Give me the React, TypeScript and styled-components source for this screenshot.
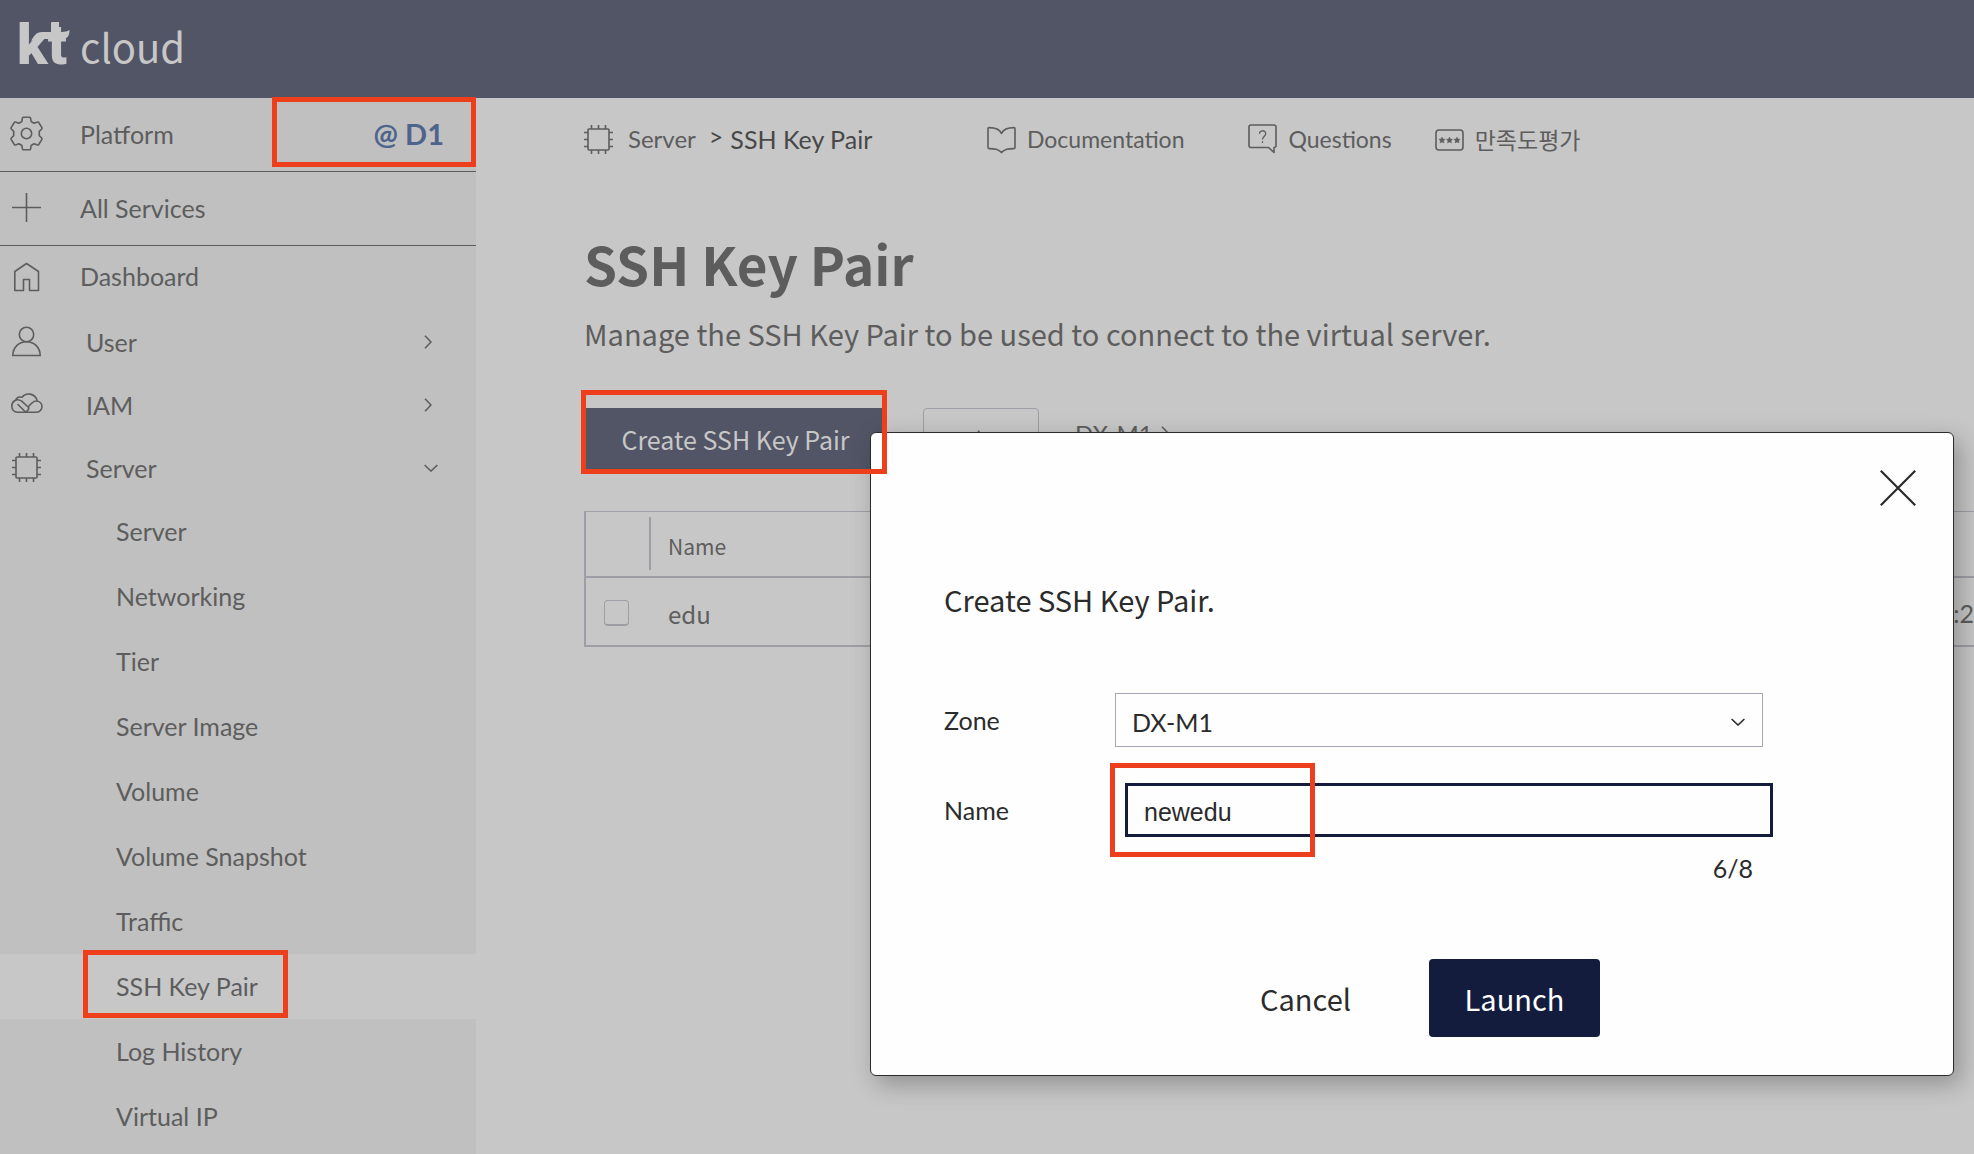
import React, { useState } from "react";
import styled, { createGlobalStyle, css } from "styled-components";

const lato = `Lato, "Noto Sans CJK KR", sans-serif`;
const noto = `"Noto Sans CJK KR", "Noto Sans", sans-serif`;

const color = {
  header: "#525566",
  sidebar: "#c0c0c0",
  page: "#c7c7c7",
  text: "#5d5d5d",
  strong: "#484848",
  line: "#9f9ea6",
  ink: "#2b2b2b",
  navy: "#141c3d",
  mark: "#ee3f1d",
};

const GlobalStyle = createGlobalStyle`
  * { box-sizing: border-box; }
  body {
    margin: 0;
    background: ${color.page};
    color: ${color.text};
    font-family: ${lato};
    font-size: 25px;
    overflow: hidden;
  }
  button, input, select { font: inherit; color: inherit; margin: 0; }
  button { cursor: pointer; }
  svg { display: block; flex: none; }
`;

const Page = styled.div`
  position: relative;
  min-height: 100vh;
  display: flex;
  flex-direction: column;
`;

const Header = styled.header`
  height: 98px;
  padding-left: 10px;
  background: ${color.header};
`;

const Logo = styled.a`
  display: block;
  width: 190px;
  text-decoration: none;
`;

const Columns = styled.div`
  flex: 1;
  display: flex;
  height: calc(100vh - 98px);
`;

const Sidebar = styled.nav`
  flex: none;
  width: 476px;
  background: ${color.sidebar};
`;

const Mark = styled.span<{ $top: number; $right: number; $bottom: number; $left: number }>`
  position: absolute;
  z-index: 20;
  top: ${(p) => p.$top}px;
  right: ${(p) => p.$right}px;
  bottom: ${(p) => p.$bottom}px;
  left: ${(p) => p.$left}px;
  border: 5px solid ${color.mark};
  pointer-events: none;
`;

const TopRow = styled.div`
  display: flex;
  align-items: center;
  height: 74px;
  padding-bottom: 2px;
  border-bottom: 1px solid ${color.text};
`;

const NavLink = styled.a<{ $indent: number }>`
  flex: 1;
  display: flex;
  align-items: center;
  color: inherit;
  text-decoration: none;

  > svg { margin: 0 ${(p) => p.$indent - 44}px 0 9px; }
`;

const ZoneTag = styled.span`
  position: relative;
  width: 204px;
  padding-right: 32px;
  color: #4f648c;
  font-size: 29px;
  font-weight: 700;
  line-height: 60px;
  text-align: right;
`;

const HomeRow = styled.div`
  display: flex;
  height: 60px;
  margin-bottom: 4px;
`;

const GroupButton = styled.button`
  display: flex;
  align-items: center;
  width: 100%;
  height: 63px;
  padding: 0 38px 0 9px;
  border: 0;
  background: none;
  text-align: left;

  > span { flex: 1; margin-left: 42px; }
`;

const ChevronSlot = styled.i`
  width: 14px;
`;

const SubList = styled.ul`
  margin: 0;
  padding: 0;
  list-style: none;
`;

const SubLink = styled.a<{ $active: boolean }>`
  display: block;
  padding-left: 116px;
  line-height: 65px;
  color: inherit;
  text-decoration: none;
  background: ${(p) => (p.$active ? color.page : "transparent")};
`;

const MarkedText = styled.span`
  position: relative;
`;

const Main = styled.main`
  flex: 1;
  min-width: 0;
  padding: 21px 0 0 108px;
`;

const TopBar = styled.div`
  display: flex;
  align-items: center;
  height: 40px;
`;

const Crumbs = styled.div`
  display: flex;
  align-items: center;
  width: 403px;
  line-height: 32px;

  a { margin: 0 13px 0 15px; color: inherit; font-size: 24px; text-decoration: none; }
  i { margin-right: 7px; font-style: normal; line-height: 26px; padding-bottom: 6px; color: ${color.strong}; }
  b { font-weight: 400; color: ${color.strong}; }
`;

const HelpLink = styled.a<{ $korean?: boolean }>`
  display: flex;
  align-items: center;
  gap: 11px;
  margin-right: 64px;
  color: inherit;
  font-family: ${(p) => (p.$korean ? noto : lato)};
  font-size: 23px;
  line-height: 32px;
  text-decoration: none;

  & + & { margin-right: 43px; }
`;

const Title = styled.h1`
  margin: 72px 0 0;
  font-family: ${noto};
  font-size: 53px;
  font-weight: 700;
  line-height: 64px;
`;

const Lead = styled.p`
  margin: 18px 0 0;
  font-family: ${noto};
  font-size: 29px;
  line-height: 40px;
`;

const Actions = styled.div`
  display: flex;
  align-items: center;
  height: 62px;
  margin: 55px 0 41px;
`;

const CreateButton = styled.button`
  position: relative;
  width: 303px;
  height: 62px;
  padding: 0;
  border: 0;
  background: ${color.header};
  color: ${color.page};
  font-family: ${noto};
  font-size: 25px;
`;

const RefreshButton = styled.button`
  display: grid;
  place-items: center;
  width: 116px;
  height: 62px;
  margin: 0 36px;
  padding: 0;
  border: 1px solid ${color.line};
  border-radius: 4px;
  background: none;
`;

const ZoneButton = styled.button`
  display: flex;
  align-items: center;
  align-self: flex-start;
  gap: 8px;
  height: 50px;
  padding: 0;
  border: 0;
  background: none;
  font-size: 24px;
`;

const Table = styled.table`
  width: 100%;
  border-collapse: collapse;
  border-left: 2px solid ${color.line};
  border-top: 1px solid ${color.line};
  table-layout: fixed;
  font-family: ${noto};

  th, td { padding: 0; font-weight: 400; text-align: left; border-bottom: 2px solid ${color.line}; }
  th { height: 65px; font-size: 21px; }
  td { height: 69px; font-size: 24px; padding-top: 4px; }
`;

const TickCell = styled.td``;

const NameHead = styled.th`
  > span {
    display: block;
    padding: 5px 0 0 17px;
    border-left: 2px solid ${color.line};
    line-height: 48px;
  }
`;

const NameCell = styled.td`
  && { padding-left: 19px; }
`;

const DateCell = styled.td`
  && { font-family: ${lato}; font-size: 25px; text-align: right; }
`;

const Tick = styled.input`
  appearance: none;
  display: block;
  width: 25px;
  height: 26px;
  margin: 0 0 0 18px;
  border: 1px solid ${color.line};
  border-bottom-width: 2px;
  border-radius: 4px;
`;

const Dialog = styled.section`
  position: absolute;
  z-index: 10;
  top: 432px;
  right: 20px;
  width: 1084px;
  padding: 37px 37px 38px;
  border: 1px solid ${color.ink};
  border-radius: 6px;
  background: #fefefe;
  color: ${color.ink};
  box-shadow: 6px 8px 24px rgba(0, 0, 0, 0.28);
`;

const CloseButton = styled.button`
  display: block;
  margin-left: auto;
  padding: 0;
  border: 0;
  background: none;
`;

const DialogBody = styled.form`
  padding: 73px 40px 0 36px;
`;

const DialogTitle = styled.h2`
  margin: 0 0 74px;
  font-family: ${noto};
  font-size: 29px;
  font-weight: 400;
  line-height: 40px;
`;

const Field = styled.div`
  display: grid;
  grid-template-columns: 171px 648px;
  align-items: center;
  height: 54px;
  margin-bottom: 36px;
`;

const controlBox = css`
  width: 100%;
  height: 54px;
  border-radius: 0;
  background: #fefefe;
  outline: none;
`;

const SelectWrap = styled.div`
  display: grid;
  align-items: center;

  > * { grid-area: 1 / 1; }
  > svg { justify-self: end; margin: 4px 18px 0 0; pointer-events: none; }
`;

const Select = styled.select`
  ${controlBox}
  appearance: none;
  padding: 4px 16px 0;
  border: 1px solid #aaa6b5;
`;

const InputWrap = styled.div`
  position: relative;
  margin: 0 -10px 0 10px;
`;

const Input = styled.input`
  ${controlBox}
  display: block;
  padding: 4px 16px 0;
  border: 3px solid ${color.navy};
  font-family: "Liberation Sans", Arial, sans-serif;
`;

const Counter = styled.output`
  display: block;
  width: 809px;
  margin-top: -20px;
  line-height: 30px;
  text-align: right;
`;

const DialogActions = styled.div`
  display: flex;
  justify-content: center;
  gap: 38px;
  margin-top: 76px;
`;

const DialogButton = styled.button<{ $primary?: boolean }>`
  width: 171px;
  height: 78px;
  padding: 0;
  border: 0;
  border-radius: 4px;
  background: ${(p) => (p.$primary ? color.navy : "none")};
  color: ${(p) => (p.$primary ? "#fff" : color.ink)};
  font-family: ${noto};
  font-size: 29px;
`;

const Icon = ({ w = 35, h = 35, box, children, sw = 1.6 }: {
  w?: number; h?: number; box?: string; sw?: number; children: React.ReactNode;
}) => (
  <svg width={w} height={h} viewBox={box ?? `0 0 ${w} ${h}`} fill="none" stroke="currentColor" strokeWidth={sw} aria-hidden="true">
    {children}
  </svg>
);

const GearIcon = () => (
  <Icon>
    <circle cx="17.5" cy="17.5" r="5.2" />
    <path strokeLinejoin="round" d="M14.3 1.2h6.4q.8 0 .9.9l.5 3.4 3 1.7 3.4-1.1q.8-.3 1.2.4l3.2 5.2q.4.8-.2 1.3l-2.4 2.3v4.4l2.4 2.3q.6.5.2 1.3l-3.2 5.2q-.4.7-1.2.4l-3.4-1.1-3 1.7-.5 3.4q-.1.9-.9.9h-6.4q-.8 0-.9-.9l-.5-3.4-3-1.7-3.4 1.1q-.8.3-1.2-.4L2.1 23.3q-.4-.8.2-1.3l2.4-2.3v-4.4L2.3 13q-.6-.5-.2-1.3l3.2-5.2q.4-.7 1.2-.4l3.4 1.1 3-1.7.5-3.4q.1-.9.9-.9z" />
  </Icon>
);
const PlusIcon = () => <Icon><path d="M17.5 3v29M3 17.5h29" /></Icon>;
const HomeIcon = () => (
  <Icon><path strokeLinejoin="round" d="M5.8 12.5 17.5 4.5l12 8v19h-9v-11h-6v11H5.8z" /></Icon>
);
const UserIcon = () => (
  <Icon><circle cx="17.5" cy="10.5" r="7.2" /><path d="M3.8 31.5c0-8 6-13.8 13.7-13.8s13.7 5.8 13.7 13.8z" /></Icon>
);
const CloudIcon = () => (
  <Icon>
    <path strokeLinecap="round" strokeLinejoin="round" d="M6.5 13.5c1-2.8 3.5-4 6.5-3.2 3.5-5 13-4.6 15.3 3.7M9 17.5l7.5 7.5q3.4-1.5 3.2-4.5l-7-6.3C8 10.8 2.8 14 2.8 19c0 3.500 2.200 6.200 5.700 6.200H17M19.500 19.500c4-4.800 6-5.700 8.200-5.500 3 .3 5.300 2.600 5.300 5.600s-2.300 5.600-5.400 5.600H17" />
  </Icon>
);
const ChipIcon = ({ size = 35 }: { size?: number }) => (
  <Icon w={size} h={size} box={size === 35 ? "0 0 35 35" : "3 3 29 29"}>
    <rect x="7" y="7" width="21" height="21" rx="1" />
    <path d="M10.5 7V3M17.5 7V3M24.5 7V3M10.5 28v4M17.5 28v4M24.5 28v4M7 10.5H3M7 17.5H3M7 24.5H3M28 10.5h4M28 17.5h4M28 24.5h4" />
  </Icon>
);
const ChevronRight = () => <Icon w={8} h={14}><path d="M1 .8 7 7l-6 6.2" /></Icon>;
const ChevronDown = () => <Icon w={14} h={8}><path d="M.6 1 7 7l6.4-6" /></Icon>;
const BookIcon = () => (
  <Icon w={29} h={29}>
    <path strokeLinejoin="round" d="M14.5 8.5C12.5 4 8 2.6 2 2.6q-1 0-1 1v19q0 1 1 1c5.5 0 9.5.2 12.5 4 3-3.8 7-4 12.5-4q1 0 1-1v-19q0-1-1-1c-6 0-10.500 1.400-12.500 5.900z" />
  </Icon>
);
const QuestionIcon = () => (
  <Icon w={29} h={30}>
    <path strokeLinejoin="round" d="M3 1h23q2 0 2 2v18.5q0 2-2 2v5L20.5 23.5H3q-2 0-2-2V3q0-2 2-2z" />
    <path strokeWidth="1.3" d="M11.5 9.8c0-4 6.2-4 6.2-.2 0 2.9-3.2 2.9-3.2 6M14.5 17.2v1.9" />
  </Icon>
);
const starPath = "l1 2 2.2.3-1.6 1.5.4 2.2-2-1.1-2 1.1.4-2.2-1.6-1.5 2.2-.3z";
const RatingIcon = () => (
  <Icon w={29} h={24}>
    <rect x="1" y="3" width="27" height="20" rx="3" />
    <path fill="currentColor" strokeWidth=".4" d={`M7 10${starPath}M14.5 10${starPath}M22 10${starPath}`} />
  </Icon>
);
const RefreshIcon = () => (
  <Icon w={18} h={18}><path d="M14.5 7A6.5 6.5 0 1 1 9 4M6 .8l3 3.2-3 3" /></Icon>
);

const subItems = [
  "Server", "Networking", "Tier", "Server Image", "Volume",
  "Volume Snapshot", "Traffic", "SSH Key Pair", "Log History", "Virtual IP",
];

export default function App() {
  const [name, setName] = useState("newedu");

  return (
    <Page>
      <GlobalStyle />
      <Header>
        <Logo href="#" aria-label="kt cloud">
          <svg width="190" height="98" viewBox="10 0 190 98" fill={color.page}>
            <text x="17" y="64" fontFamily="Roboto, sans-serif" fontWeight="900" fontSize="56">kt</text>
            <path d="M51 23Q51 22 52 22H59V36H51z" />
            <path d="M31 41C34 36 36 32 42 32H58C63 32 66 32 69.5 30C69.5 35 68 39 62 39H38C35 39 33 40 31 41z" />
            <text x="80" y="63" fontFamily="Noto Sans CJK KR, sans-serif" fontSize="40">cloud</text>
          </svg>
        </Logo>
      </Header>

      <Columns>
        <Sidebar>
          <TopRow>
            <NavLink href="#" $indent={80}><GearIcon />Platform</NavLink>
            <ZoneTag>
              @ D1
              <Mark $top={-7} $right={0} $bottom={-3} $left={0} />
            </ZoneTag>
          </TopRow>
          <TopRow>
            <NavLink href="#" $indent={80}><PlusIcon />All Services</NavLink>
          </TopRow>
          <HomeRow>
            <NavLink href="#" $indent={80}><HomeIcon />Dashboard</NavLink>
          </HomeRow>
          <GroupButton type="button"><UserIcon /><span>User</span><ChevronSlot><ChevronRight /></ChevronSlot></GroupButton>
          <GroupButton type="button"><CloudIcon /><span>IAM</span><ChevronSlot><ChevronRight /></ChevronSlot></GroupButton>
          <GroupButton type="button"><ChipIcon /><span>Server</span><ChevronSlot><ChevronDown /></ChevronSlot></GroupButton>
          <SubList>
            {subItems.map((item) => (
              <li key={item}>
                <SubLink href="#" $active={item === "SSH Key Pair"}>
                  {item === "SSH Key Pair" ? (
                    <MarkedText>{item}<Mark $top={-21} $right={-30} $bottom={-17} $left={-33} /></MarkedText>
                  ) : item}
                </SubLink>
              </li>
            ))}
          </SubList>
        </Sidebar>

        <Main>
          <TopBar>
            <Crumbs>
              <ChipIcon size={29} />
              <a href="#">Server</a>
              <i>&gt;</i>
              <b>SSH Key Pair</b>
            </Crumbs>
            <HelpLink href="#"><BookIcon />Documentation</HelpLink>
            <HelpLink href="#"><QuestionIcon />Questions</HelpLink>
            <HelpLink href="#" $korean><RatingIcon />만족도평가</HelpLink>
          </TopBar>

          <Title>SSH Key Pair</Title>
          <Lead>Manage the SSH Key Pair to be used to connect to the virtual server.</Lead>

          <Actions>
            <CreateButton type="button">
              Create SSH Key Pair
              <Mark $top={-18} $right={0} $bottom={-4} $left={-3} />
            </CreateButton>
            <RefreshButton type="button" aria-label="Refresh"><RefreshIcon /></RefreshButton>
            <ZoneButton type="button">DX-M1 <ChevronRight /></ZoneButton>
          </Actions>

          <Table>
            <colgroup><col width="64" /><col /><col width="60" /></colgroup>
            <thead>
              <tr><th /><NameHead><span>Name</span></NameHead><th /></tr>
            </thead>
            <tbody>
              <tr>
                <TickCell><Tick type="checkbox" aria-label="edu" /></TickCell>
                <NameCell>edu</NameCell>
                <DateCell>:2</DateCell>
              </tr>
            </tbody>
          </Table>
        </Main>
      </Columns>

      <Dialog role="dialog" aria-labelledby="dialog-title">
        <CloseButton type="button" aria-label="Close">
          <Icon w={36} h={36} sw={2.2}><path d="M.8.8l34.4 34.4M35.2.8.8 35.2" /></Icon>
        </CloseButton>
        <DialogBody onSubmit={(e) => e.preventDefault()}>
          <DialogTitle id="dialog-title">Create SSH Key Pair.</DialogTitle>
          <Field>
            <label htmlFor="zone">Zone</label>
            <SelectWrap>
              <Select id="zone"><option>DX-M1</option></Select>
              <ChevronDown />
            </SelectWrap>
          </Field>
          <Field>
            <label htmlFor="name">Name</label>
            <InputWrap>
              <Input id="name" maxLength={8} value={name} onChange={(e) => setName(e.target.value)} />
              <Mark $top={-20} $right={458} $bottom={-20} $left={-15} />
            </InputWrap>
          </Field>
          <Counter htmlFor="name">{name.length}/8</Counter>
          <DialogActions>
            <DialogButton type="button">Cancel</DialogButton>
            <DialogButton type="submit" $primary>Launch</DialogButton>
          </DialogActions>
        </DialogBody>
      </Dialog>
    </Page>
  );
}
